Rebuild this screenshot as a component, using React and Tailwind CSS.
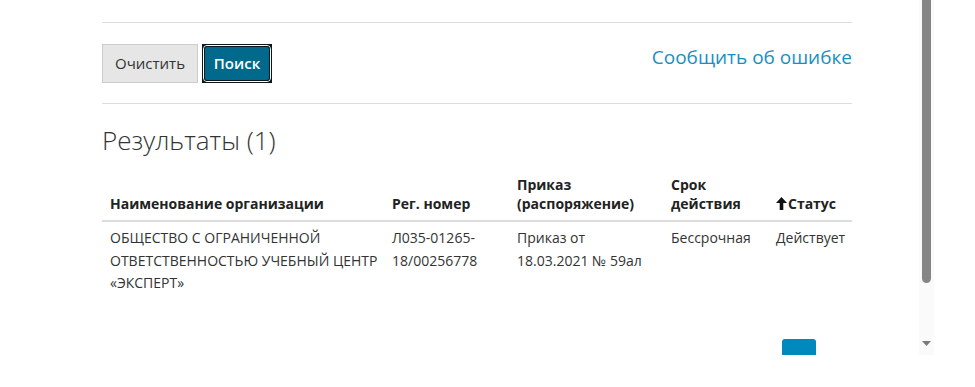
import React from 'react';

const font = { fontFamily: '"Open Sans", "Liberation Sans", sans-serif' };

const колонки = [
  { ключ: 'org', заголовок: 'Наименование организации', ширина: 'w-[282px]', отступ: 'pl-[8px] pr-[2px]' },
  { ключ: 'reg', заголовок: 'Рег. номер', ширина: 'w-[125px]', отступ: 'px-[8px]' },
  { ключ: 'prikaz', заголовок: 'Приказ (распоряжение)', ширина: 'w-[154px]', отступ: 'px-[8px]' },
  { ключ: 'srok', заголовок: 'Срок действия', ширина: 'w-[105px]', отступ: 'px-[8px]' },
  { ключ: 'status', заголовок: 'Статус', ширина: 'w-[84px]', отступ: 'px-[8px]', сортировка: true },
];

const строки = [
  {
    id: 1,
    org: 'ОБЩЕСТВО С ОГРАНИЧЕННОЙ ОТВЕТСТВЕННОСТЬЮ УЧЕБНЫЙ ЦЕНТР «ЭКСПЕРТ»',
    reg: 'Л035-01265-18/00256778',
    prikaz: 'Приказ от 18.03.2021 № 59ал',
    srok: 'Бессрочная',
    status: 'Действует',
  },
];

const СтрелкаВверх = () => (
  <svg width="11" height="13" viewBox="0 0 11 13" className="inline-block mr-[1px] -mt-[3px] align-middle">
    <path d="M5.5 0 L11 6 L7.3 6 L7.3 13 L3.7 13 L3.7 6 L0 6 Z" fill="#111" />
  </svg>
);

const Полоса = () => (
  <div className="w-[15px] h-full bg-[#fafafa] flex flex-col items-center">
    <div className="w-[9px] h-[283px] bg-[#858585] rounded-b-[5px]" />
    <div className="flex-1" />
    <svg width="9" height="6" viewBox="0 0 9 6" className="mb-[8px]">
      <path d="M0 0 L9 0 L4.5 5 Z" fill="#7a7a7a" />
    </svg>
  </div>
);

export default function App() {
  return (
    <div className="w-[975px] h-[387px] bg-white overflow-hidden" style={font}>
      <div className="flex h-[355px]">
        <div className="w-[919px] h-full overflow-hidden">
          <div className="ml-[102px] w-[750px] pt-[22px]">
            <div className="border-t border-[#dddddd]" />

            <div className="flex items-center justify-between pt-[21px] pb-[20px] border-b border-[#dddddd]">
              <div className="flex items-center gap-[4px]">
                <button className="h-[39px] w-[96px] bg-[#e6e6e6] border border-[#cccccc] text-[15px] text-[#333]">
                  Очистить
                </button>
                <span className="p-[1px] bg-[#0b171b]">
                  <span className="block border border-white rounded-[4px]">
                    <span className="flex items-center justify-center h-[35px] w-[66px] rounded-[3px] border border-[#0b171b] bg-[#00698c] text-white text-[15px] font-semibold">
                      Поиск
                    </span>
                  </span>
                </span>
              </div>
              <a className="mb-[12px] text-[19px] text-[#1a8ec2] leading-none">Сообщить об ошибке</a>
            </div>

            <h3 className="mt-[19px] text-[26px] font-light text-[#333] leading-[34px]">
              Результаты ({строки.length})
            </h3>

            <table className="mt-[10px] w-[750px] table-fixed border-collapse">
              <thead>
                <tr className="border-b-2 border-[#dddddd]">
                  {колонки.map(к => (
                    <th
                      key={к.ключ}
                      className={`${к.ширина} px-[8px] pt-[8px] pb-[7px] text-left align-bottom text-[14px] font-bold leading-[19px] text-[#222]`}
                    >
                      {к.сортировка && <СтрелкаВверх />}
                      {к.заголовок}
                    </th>
                  ))}
                </tr>
              </thead>
              <tbody>
                {строки.map(с => (
                  <tr key={с.id}>
                    {колонки.map(к => (
                      <td key={к.ключ} className={`${к.отступ} pt-[5px] pb-[8px] align-top text-[14px] leading-[22.5px] text-[#333]`}>
                        {с[к.ключ]}
                      </td>
                    ))}
                  </tr>
                ))}
              </tbody>
            </table>

            <div className="flex justify-end mr-[36px] mt-[36px]">
              <div className="w-[34px] h-[16px] bg-[#0089bd] rounded-t-[3px]" />
            </div>
          </div>
        </div>
        <Полоса />
      </div>
    </div>
  );
}
